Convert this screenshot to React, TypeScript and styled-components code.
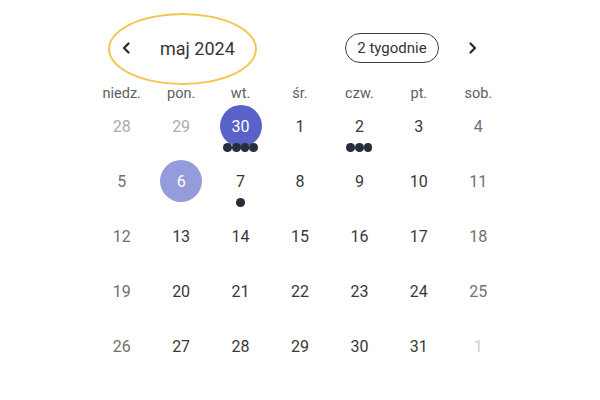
import React from "react";
import styled, { createGlobalStyle } from "styled-components";

/*******************************************************************
 *                            **Types**                            *
 *******************************************************************/
type DayKind = "weekday" | "weekend" | "outside" | "faded";
type Highlight = "none" | "today" | "selected";

interface IDay {
  label: number;
  kind: DayKind;
  highlight?: Highlight;
  events?: number;
}

/*******************************************************************
 *                  **Utility functions/constants**                *
 *******************************************************************/
const WEEKDAYS = ["niedz.", "pon.", "wt.", "śr.", "czw.", "pt.", "sob."];

const TEXT_COLORS: Record<DayKind, string> = {
  weekday: "#383838",
  weekend: "#707070",
  outside: "#acacac",
  faded: "#d0d0d0",
};

const CIRCLE_COLORS: Record<Highlight, string> = {
  none: "transparent",
  today: "#5a62c7",
  selected: "#959cdb",
};

const buildWeeks = (): IDay[][] => {
  const weeks: IDay[][] = [
    [
      { label: 28, kind: "outside" },
      { label: 29, kind: "outside" },
      { label: 30, kind: "weekday", highlight: "today", events: 4 },
      { label: 1, kind: "weekday" },
      { label: 2, kind: "weekday", events: 3 },
      { label: 3, kind: "weekday" },
      { label: 4, kind: "weekend" },
    ],
  ];
  let day = 5;
  for (let w = 0; w < 4; w++) {
    const week: IDay[] = [];
    for (let d = 0; d < 7; d++) {
      if (day > 31) {
        week.push({ label: day - 31, kind: "faded" });
      } else {
        week.push({
          label: day,
          kind: d === 0 || d === 6 ? "weekend" : "weekday",
        });
      }
      day++;
    }
    weeks.push(week);
  }
  weeks[1][1].highlight = "selected";
  weeks[1][2].events = 1;
  return weeks;
};

const WEEKS = buildWeeks();

/*******************************************************************
 *                            **Styles**                           *
 *******************************************************************/
const GlobalStyle = createGlobalStyle`
  html, body {
    margin: 0;
    padding: 0;
    background: #ffffff;
    font-family: Roboto, "Noto Sans", "Liberation Sans", sans-serif;
  }
`;

const Page = styled.div`
  width: 600px;
  height: 400px;
  display: flex;
  justify-content: center;
  padding-top: 18px;
  box-sizing: border-box;
`;

const Calendar = styled.div`
  width: 416px;
  display: flex;
  flex-direction: column;
`;

const Header = styled.div`
  position: relative;
  height: 60px;
  display: flex;
  align-items: center;
  padding: 0 25px 0 24px;
`;

const NavButton = styled.button`
  width: 20px;
  height: 20px;
  padding: 0;
  border: none;
  background: none;
  display: flex;
  align-items: center;
  justify-content: center;
  color: #2b2b2b;
`;

const Title = styled.div`
  margin-left: 24px;
  font-size: 18px;
  color: #363636;
`;

const Spacer = styled.div`
  flex: 1;
`;

const RangeButton = styled.button`
  width: 94px;
  height: 30px;
  margin-right: 24px;
  border: 1px solid #3a3a3a;
  border-radius: 15px;
  background: #ffffff;
  font-family: inherit;
  font-size: 15px;
  color: #363636;
  padding: 0;
`;

const Annotation = styled.div`
  position: absolute;
  left: 16px;
  top: -5px;
  width: 149px;
  height: 72px;
  box-sizing: border-box;
  border: 2.5px solid #f2c64f;
  border-radius: 50%;
  pointer-events: none;
`;

const Grid = styled.div`
  display: grid;
  grid-template-columns: repeat(7, 1fr);
`;

const WeekdayLabel = styled.div`
  height: 27px;
  padding-top: 3px;
  box-sizing: border-box;
  display: flex;
  align-items: center;
  justify-content: center;
  font-size: 14.5px;
  color: #5e5e5e;
`;

const Cell = styled.div`
  height: 55px;
  display: flex;
  flex-direction: column;
  align-items: center;
`;

const DayCircle = styled.div<{ $kind: DayKind; $highlight: Highlight }>`
  width: 42px;
  height: 42px;
  border-radius: 50%;
  display: flex;
  align-items: center;
  justify-content: center;
  font-size: 16px;
  background: ${(p) => CIRCLE_COLORS[p.$highlight]};
  color: ${(p) =>
    p.$highlight === "none" ? TEXT_COLORS[p.$kind] : "#ffffff"};
`;

const Dots = styled.div`
  display: flex;
  margin-top: -4px;
`;

const Dot = styled.span`
  width: 8.7px;
  height: 8.7px;
  border-radius: 50%;
  background: #262d3b;
`;

/*******************************************************************
 *                           **Component**                         *
 *******************************************************************/
const Chevron: React.FC<{ dir: "left" | "right" }> = ({ dir }) => (
  <svg width="10" height="14" viewBox="0 0 10 14">
    <polyline
      points={dir === "left" ? "7.5,2.5 3,7 7.5,11.5" : "2.5,2.5 7,7 2.5,11.5"}
      fill="none"
      stroke="currentColor"
      strokeWidth="2.3"
      strokeLinecap="round"
      strokeLinejoin="round"
    />
  </svg>
);

const App: React.FC = () => (
  <>
    <GlobalStyle />
    <Page>
      <Calendar>
        <Header>
          <NavButton aria-label="Poprzedni miesiąc">
            <Chevron dir="left" />
          </NavButton>
          <Title>maj 2024</Title>
          <Spacer />
          <RangeButton>2 tygodnie</RangeButton>
          <NavButton aria-label="Następny miesiąc">
            <Chevron dir="right" />
          </NavButton>
          <Annotation />
        </Header>

        <Grid>
          {WEEKDAYS.map((w) => (
            <WeekdayLabel key={w}>{w}</WeekdayLabel>
          ))}
          {WEEKS.flat().map((d, i) => (
            <Cell key={i}>
              <DayCircle $kind={d.kind} $highlight={d.highlight ?? "none"}>
                {d.label}
              </DayCircle>
              {d.events ? (
                <Dots>
                  {Array.from({ length: d.events }).map((_, j) => (
                    <Dot key={j} />
                  ))}
                </Dots>
              ) : null}
            </Cell>
          ))}
        </Grid>
      </Calendar>
    </Page>
  </>
);

export default App;
